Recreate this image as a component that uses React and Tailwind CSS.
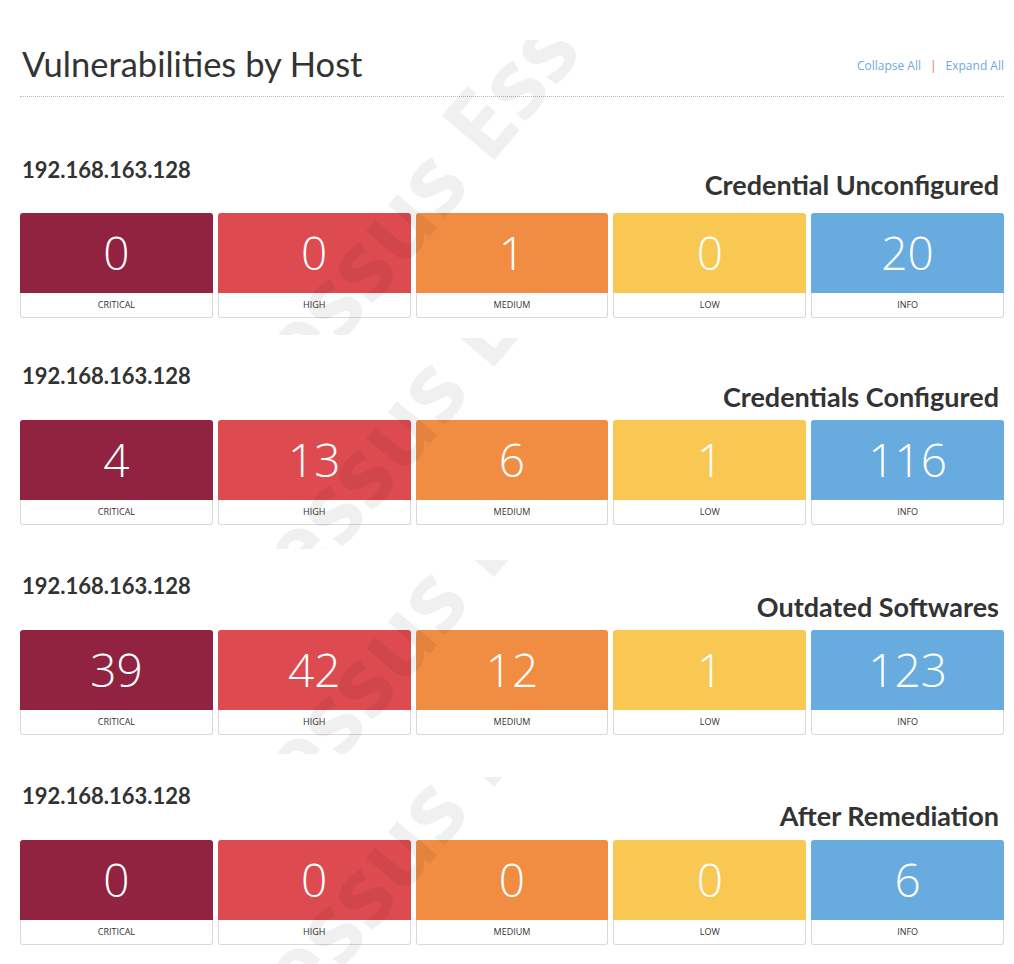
import React from "react";

const LEVELS = [
  { label: "CRITICAL", bg: "bg-[#912341]" },
  { label: "HIGH", bg: "bg-[#dd4b50]" },
  { label: "MEDIUM", bg: "bg-[#f18d43]" },
  { label: "LOW", bg: "bg-[#f8c852]" },
  { label: "INFO", bg: "bg-[#67abdf]" },
];

const BLOCKS = [
  {
    name: "Credential Unconfigured",
    vals: [0, 0, 1, 0, 20],
    rowMt: "mt-[61px]",
    nameMt: "mt-[12px]",
    cardsMt: "mt-[13px]",
    pad: "pb-[17px]",
    wm: "top-[318px]",
  },
  {
    name: "Credentials Configured",
    vals: [4, 13, 6, 1, 116],
    wrap: "mt-[3px] pt-[26px] pb-[24px]",
    nameMt: "mt-[18px]",
    cardsMt: "mt-[8px]",
    wm: "top-[227px]",
  },
  {
    name: "Outdated Softwares",
    vals: [39, 42, 12, 1, 123],
    wrap: "mt-[11px] pt-[14px] pb-[19px]",
    nameMt: "mt-[18px]",
    cardsMt: "mt-[8px]",
    wm: "top-[215px]",
  },
  {
    name: "After Remediation",
    vals: [0, 0, 0, 0, 6],
    wrap: "mt-[23px] pt-[7px] pb-[20px]",
    nameMt: "mt-[17px]",
    cardsMt: "mt-[9px]",
    wm: "top-[208px]",
  },
];

function Watermark({ pos }) {
  return (
    <span
      className={`pointer-events-none absolute left-[262px] ${pos} z-10 origin-bottom-left -rotate-[50deg] whitespace-nowrap text-[96px] font-bold leading-none text-black/[0.06]`}
      style={{ fontFamily: '"Open Sans", sans-serif' }}
    >
      Nessus Essentials
    </span>
  );
}

function Card({ level, value }) {
  return (
    <div className="flex flex-col">
      <div
        className={`${level.bg} flex h-[80px] items-center justify-center rounded-t-[3px] pb-[3px] text-[46px] font-light leading-none text-white`}
        style={{ fontFamily: '"Open Sans", sans-serif' }}
      >
        {value}
      </div>
      <div
        className="flex h-[25px] items-center justify-center rounded-b-[3px] border border-t-0 border-[#d9d9d9] bg-white text-[9px] text-[#333]"
        style={{ fontFamily: '"Open Sans", sans-serif' }}
      >
        {level.label}
      </div>
    </div>
  );
}

function HostBlock({ b }) {
  return (
    <>
      <div className={`flex items-start justify-between ${b.rowMt || ""}`}>
        <div className="pl-[2px] text-[22px] font-bold leading-[24px] text-[#333]">
          192.168.163.128
        </div>
        <div
          className={`${b.nameMt} pr-[5px] text-[27px] font-bold leading-[30px] text-[#333]`}
        >
          {b.name}
        </div>
      </div>
      <div className={`${b.cardsMt} grid grid-cols-5 gap-[5px]`}>
        {LEVELS.map((l, i) => (
          <Card key={l.label} level={l} value={b.vals[i]} />
        ))}
      </div>
    </>
  );
}

export default function App() {
  const [first, ...rest] = BLOCKS;
  return (
    <div
      className="min-h-[964px] bg-white pt-[40px]"
      style={{ fontFamily: "Lato, sans-serif" }}
    >
      <div className={`relative overflow-hidden pl-[20px] pr-[10px] ${first.pad}`}>
        <Watermark pos={first.wm} />
        <div className="flex items-center justify-between border-b border-dotted border-[#bbb] pb-[12px] pt-[4px]">
          <h1 className="pl-[2px] text-[34.5px] font-normal leading-[40px] text-[#333]">
            Vulnerabilities by Host
          </h1>
          <div
            className="flex items-center gap-[9px] pt-[4px] text-[12px] text-[#6fa9de]"
            style={{ fontFamily: '"Open Sans", sans-serif' }}
          >
            <span>Collapse All</span>
            <span className="text-[#e0793a]">|</span>
            <span>Expand All</span>
          </div>
        </div>
        <HostBlock b={first} />
      </div>
      {rest.map((b) => (
        <div
          key={b.name}
          className={`relative overflow-hidden pl-[20px] pr-[10px] ${b.wrap}`}
        >
          <Watermark pos={b.wm} />
          <HostBlock b={b} />
        </div>
      ))}
    </div>
  );
}
